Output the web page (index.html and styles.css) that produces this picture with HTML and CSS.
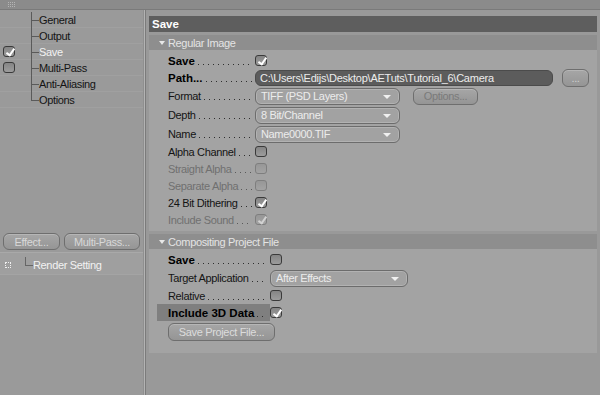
FILE: index.html
```html
<!DOCTYPE html>
<html lang="en">
<head>
    <meta charset="UTF-8">
    <title>Render Settings - Save</title>
    <link rel="stylesheet" href="styles.css">
</head>
<body>
    <div class="topbar"><span class="grip"></span></div>

    <div class="main">
        <!-- left tree -->
        <aside class="sidebar">
            <ul class="tree">
                <li><span class="slot"></span><span class="branch"></span>General</li>
                <li><span class="slot"></span><span class="branch"></span>Output</li>
                <li class="selected"><span class="slot"><span class="cb on"></span></span><span class="branch"></span>Save</li>
                <li><span class="slot"><span class="cb"></span></span><span class="branch"></span>Multi-Pass</li>
                <li><span class="slot"></span><span class="branch"></span>Anti-Aliasing</li>
                <li class="last"><span class="slot"></span><span class="branch"></span>Options</li>
            </ul>

            <div class="side-buttons">
                <span class="btn effect">Effect...</span>
                <span class="btn multipass">Multi-Pass...</span>
            </div>

            <div class="render-row">
                <span class="render-icon"></span>
                <span class="render-branch"></span>
                Render Setting
            </div>
        </aside>

        <div class="divider"></div>

        <!-- right settings -->
        <section class="content">
            <div class="panel-title">Save</div>

            <div class="group-head"><span class="tri"></span>Regular Image</div>
            <div class="group-body">
                <div class="row">
                    <span class="label"><span class="b">Save</span><span class="dots"></span></span>
                    <span class="cb on"></span>
                </div>
                <div class="row">
                    <span class="label"><span class="b">Path...</span><span class="dots"></span></span>
                    <span class="path">C:\Users\Edijs\Desktop\AETuts\Tutorial_6\Camera</span>
                    <span class="btn browse">...</span>
                </div>
                <div class="row tall">
                    <span class="label">Format<span class="dots"></span></span>
                    <span class="select">TIFF (PSD Layers)</span>
                    <span class="btn options">Options...</span>
                </div>
                <div class="row tall">
                    <span class="label">Depth<span class="dots"></span></span>
                    <span class="select">8 Bit/Channel</span>
                </div>
                <div class="row tall">
                    <span class="label">Name<span class="dots"></span></span>
                    <span class="select">Name0000.TIF</span>
                </div>
                <div class="row">
                    <span class="label">Alpha Channel<span class="dots"></span></span>
                    <span class="cb"></span>
                </div>
                <div class="row off">
                    <span class="label">Straight Alpha<span class="dots"></span></span>
                    <span class="cb"></span>
                </div>
                <div class="row off">
                    <span class="label">Separate Alpha<span class="dots"></span></span>
                    <span class="cb"></span>
                </div>
                <div class="row">
                    <span class="label">24 Bit Dithering<span class="dots"></span></span>
                    <span class="cb on"></span>
                </div>
                <div class="row off">
                    <span class="label">Include Sound<span class="dots"></span></span>
                    <span class="cb on"></span>
                </div>
            </div>

            <div class="group-head"><span class="tri"></span>Compositing Project File</div>
            <div class="group-body comp">
                <div class="row">
                    <span class="label"><span class="b">Save</span><span class="dots"></span></span>
                    <span class="cb"></span>
                </div>
                <div class="row tall">
                    <span class="label">Target Application<span class="dots"></span></span>
                    <span class="select target">After Effects</span>
                </div>
                <div class="row">
                    <span class="label">Relative<span class="dots"></span></span>
                    <span class="cb"></span>
                </div>
                <div class="row">
                    <span class="label hl"><span class="b">Include 3D Data</span><span class="dots"></span></span>
                    <span class="cb on"></span>
                </div>
                <div class="row button-row">
                    <span class="btn save-project">Save Project File...</span>
                </div>
            </div>
        </section>
    </div>
</body>
</html>
```

FILE: styles.css
```css
/* render settings panel */
* {
    box-sizing: border-box;
}

body {
    margin: 0;
    width: 600px;
    height: 395px;
    overflow: hidden;
    background-color: #999999;
    font-family: "Liberation Sans", Arial, sans-serif;
    font-size: 11px;
    letter-spacing: -0.35px;
    color: #141414;
}

.topbar {
    height: 10px;
    padding: 2px 0 0 8px;
    background-color: #8b8b8b;
    border-bottom: 1px solid #7a7a7a;
}

.grip {
    display: block;
    width: 8px;
    height: 5px;
    background: radial-gradient(circle at 0.5px 0.5px, #b4b4b4 0.5px, transparent 0.7px) 0 0 / 2px 2px;
}

.main {
    display: flex;
    height: 385px;
}

/* sidebar */
.sidebar {
    width: 143px;
    background-color: #9a9a9a;
}

.tree {
    list-style-type: none;
    margin: 0;
    padding: 2px 0 0 0;
    height: 223px;
}

.tree li {
    display: flex;
    align-items: center;
    height: 16px;
    border-bottom: 1px solid #a0a0a0;
}

.tree li.selected {
    color: #f2f2f2;
}

.slot {
    width: 31px;
    padding-left: 3px;
    display: flex;
    align-items: center;
}

.branch {
    width: 8px;
    align-self: stretch;
    margin-bottom: -1px;
    background:
        linear-gradient(#5a5a5a, #5a5a5a) left top / 1px 100% no-repeat,
        linear-gradient(#5a5a5a, #5a5a5a) left center / 100% 1px no-repeat;
}

.tree li.last .branch {
    background:
        linear-gradient(#5a5a5a, #5a5a5a) left top / 1px 50% no-repeat,
        linear-gradient(#5a5a5a, #5a5a5a) left center / 100% 1px no-repeat;
}

.side-buttons {
    display: flex;
    gap: 4px;
    padding-left: 3px;
    height: 19px;
}

.render-row {
    display: flex;
    align-items: center;
    height: 23px;
    padding-top: 3px;
    border-top: 1px solid #a9a9a9;
    border-bottom: 1px solid #a4a4a4;
    background-color: #9f9f9f;
    color: #f2f2f2;
}

.render-icon {
    width: 6px;
    height: 6px;
    margin: 0 14px 0 5px;
    border: 1px dotted #f0f0f0;
}

.render-branch {
    width: 8px;
    height: 9px;
    margin-top: -7px;
    border-left: 1px solid #666;
    border-bottom: 1px solid #666;
}

.divider {
    width: 4px;
    background: linear-gradient(to right, #8f8f8f 1px, #b3b3b3 1px, #b3b3b3 2px, #7b7b7b 2px, #7b7b7b 3px, #999 3px);
}

/* settings */
.content {
    flex: 1;
    padding: 6px 3px 0 2px;
}

.panel-title {
    height: 16px;
    line-height: 16px;
    padding-left: 3px;
    background-color: #5e5e5e;
    color: #ffffff;
    font-weight: bold;
    font-size: 11.5px;
    letter-spacing: 0;
}

.group-head {
    display: flex;
    align-items: center;
    margin-top: 3px;
    height: 15px;
    padding-left: 10px;
    background-color: #8e8e8e;
    color: #e4e4e4;
}

.tri {
    width: 0;
    height: 0;
    margin-right: 3px;
    border-left: 3px solid transparent;
    border-right: 3px solid transparent;
    border-top: 4px solid #e8e8e8;
}

.group-body {
    padding: 2px 0 3px 19px;
    background-color: #a3a3a3;
}

.group-body.comp {
    padding-bottom: 12px;
}

.row {
    display: flex;
    align-items: center;
    height: 17px;
}

.row.tall {
    height: 18px;
    margin-top: 1px;
}

.row.off {
    color: #707070;
}

.label {
    display: flex;
    align-items: center;
    width: 87px;
    height: 17px;
    white-space: nowrap;
}

.comp .label {
    width: 102px;
}

.label.hl {
    width: 113px;
    margin-left: -11px;
    padding-left: 11px;
    background-color: #7f7f7f;
}

.b {
    font-weight: bold;
    font-size: 11.5px;
    letter-spacing: 0;
    color: #000;
}

.dots {
    flex: 1;
    height: 1px;
    margin: 7px 3px 0 3px;
    background: linear-gradient(to right, #2e2e2e 1px, transparent 1px) 0 0 / 5px 1px repeat-x;
}

.row.off .dots {
    background-image: linear-gradient(to right, #5a5a5a 1px, transparent 1px);
}

.cb {
    position: relative;
    display: inline-block;
    width: 12px;
    height: 11px;
    border: 1px solid #3a3a3a;
    border-radius: 3px;
    background: linear-gradient(#858585, #9c9c9c);
}

.row.off .cb {
    border-color: #7e7e7e;
    background: linear-gradient(#979797, #a3a3a3);
}

.cb.on::after {
    content: "";
    position: absolute;
    left: 4px;
    top: 0;
    width: 3px;
    height: 7px;
    border: solid #ffffff;
    border-width: 0 2px 2px 0;
    transform: rotate(35deg);
}

.row.off .cb.on::after {
    border-color: #d2d2d2;
}

.path {
    width: 298px;
    height: 16px;
    line-height: 14px;
    padding-left: 4px;
    border: 1px solid #4b4b4b;
    border-radius: 6px;
    background-color: #5c5c5c;
    color: #ececec;
    letter-spacing: -0.25px;
    white-space: nowrap;
}

.select {
    position: relative;
    width: 145px;
    height: 17px;
    line-height: 15px;
    padding-left: 5px;
    border: 1px solid #6c6c6c;
    border-radius: 6px;
    background-color: #a2a2a2;
    box-shadow: inset 0 0 0 1px #b2b2b2;
    color: #ececec;
    white-space: nowrap;
}

.select::after {
    content: "";
    position: absolute;
    right: 8px;
    top: 6px;
    border-left: 4px solid transparent;
    border-right: 4px solid transparent;
    border-top: 4px solid #f0f0f0;
}

.select.target {
    width: 138px;
}

.btn {
    display: inline-flex;
    align-items: center;
    justify-content: center;
    height: 17px;
    border: 1px solid #6e6e6e;
    border-radius: 6px;
    background: linear-gradient(#a6a6a6, #959595);
    box-shadow: inset 0 1px 0 #b6b6b6;
    color: #d8d8d8;
    white-space: nowrap;
}

.effect {
    width: 57px;
}

.multipass {
    width: 76px;
}

.browse {
    width: 27px;
    height: 18px;
    margin-left: 9px;
    color: #cfcfcf;
}

.options {
    width: 65px;
    margin-left: 13px;
    color: #7a7a7a;
}

.button-row {
    height: 19px;
    margin-top: 1px;
}

.save-project {
    width: 107px;
    height: 18px;
    color: #dcdcdc;
}
```
